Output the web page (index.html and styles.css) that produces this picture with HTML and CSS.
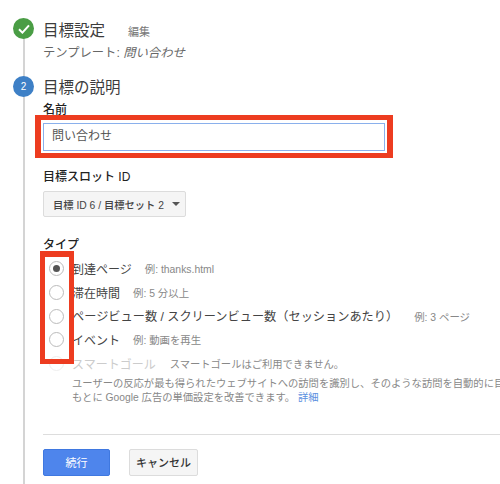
FILE: index.html
```html
<!DOCTYPE html>
<html lang="ja">
<head>
<meta charset="utf-8">
<title>目標の説明</title>
<link rel="stylesheet" href="styles.css">
</head>
<body>
<div class="rail"></div>
<section class="step done">
  <div class="badge green">
    <svg width="12" height="10" viewBox="0 0 12 10"><path d="M1 5.2 4.4 8.6 11 1.4" fill="none" stroke="#fff" stroke-width="2"/></svg>
  </div>
  <div class="step-head">
    <h2 class="title">目標設定</h2><a class="edit">編集</a>
  </div>
  <p class="template">テンプレート: <em>問い合わせ</em></p>
</section>
<section class="step">
  <div class="badge blue">2</div>
  <div class="step-head"><h2 class="title">目標の説明</h2></div>
  <label class="label name-label">名前</label>
  <div class="input">問い合わせ</div>
  <label class="label slot-label">目標スロット ID</label>
  <div class="select">目標 ID 6 / 目標セット 2<span class="caret"></span></div>
  <label class="label type-label">タイプ</label>
  <ul class="radios">
    <li class="radio-row"><span class="radio on"></span><span class="rtext">到達ページ</span><span class="hint">例: thanks.html</span></li>
    <li class="radio-row"><span class="radio"></span><span class="rtext">滞在時間</span><span class="hint">例: 5 分以上</span></li>
    <li class="radio-row"><span class="radio"></span><span class="rtext long">ページビュー数 / スクリーンビュー数（セッションあたり）</span><span class="hint wide">例: 3 ページ</span></li>
    <li class="radio-row"><span class="radio"></span><span class="rtext">イベント</span><span class="hint">例: 動画を再生</span></li>
    <li class="radio-row off"><span class="radio"></span><span class="rtext">スマートゴール</span><span class="hint">スマートゴールはご利用できません。</span></li>
  </ul>
  <p class="desc">ユーザーの反応が最も得られたウェブサイトへの訪問を識別し、そのような訪問を自動的に目<br>もとに Google 広告の単価設定を改善できます。 <a class="more">詳細</a></p>
  <hr class="rule">
  <div class="actions">
    <button class="btn primary">続行</button>
    <button class="btn">キャンセル</button>
  </div>
</section>
<div class="mark mark-input"></div>
<div class="mark mark-radios"></div>
</body>
</html>
```
FILE: styles.css
```css
* { box-sizing: border-box; }
html, body { margin: 0; padding: 0; }
body {
  position: relative;
  width: 500px;
  height: 484px;
  overflow: hidden;
  background: #fff;
  color: #333;
  font-family: "Liberation Sans", "Noto Sans CJK JP", sans-serif;
  font-size: 12px;
  padding: 18px 0 0 43px;
}
.rail { position: absolute; left: 23px; top: 28px; bottom: 0; width: 1.5px; background: #d4d4d4; }
.step { position: relative; }
.step.done { height: 56px; }
.badge {
  position: absolute;
  left: -30px;
  top: 0;
  width: 21px;
  height: 21px;
  border-radius: 50%;
  color: #fff;
  font-size: 10px;
  display: flex;
  align-items: center;
  justify-content: center;
}
.green { background: #4a9d45; }
.blue { background: #3e80c6; top: 2px; }
.step-head { display: flex; align-items: baseline; height: 26px; }
.title { margin: 0; font-size: 15.5px; font-weight: 400; line-height: 26px; color: #3c3c3c; }
.edit { margin-left: 23px; font-size: 11px; color: #777; }
.template { margin: 0; font-size: 12.3px; line-height: 18px; color: #666; white-space: nowrap; }
.template em { font-style: italic; }
.step + .step { padding-top: 1px; }
.label { display: block; font-size: 12px; font-weight: 500; line-height: 16px; color: #222; white-space: nowrap; }
.name-label { margin-top: 1px; }
.input {
  width: 342px;
  height: 28px;
  margin-top: 5px;
  border: 1.5px solid #8ab0ec;
  padding-left: 8px;
  line-height: 25px;
  font-size: 12px;
  color: #555;
}
.slot-label { margin-top: 18px; }
.select {
  display: flex;
  align-items: center;
  width: 143px;
  height: 26px;
  margin-top: 6px;
  padding-left: 9px;
  border: 1px solid #dcdcdc;
  border-radius: 2px;
  background: #f5f5f5;
  font-size: 10.3px;
  font-weight: 500;
  color: #444;
  white-space: nowrap;
}
.caret {
  margin-left: 8px;
  border-left: 4px solid transparent;
  border-right: 4px solid transparent;
  border-top: 4px solid #555;
}
.type-label { margin-top: 20px; }
.radios { list-style: none; margin: 4px 0 0; padding: 0; }
.radio-row { display: flex; align-items: center; height: 23.7px; white-space: nowrap; }
.radio {
  flex: none;
  width: 15px;
  height: 15px;
  margin-left: 6px;
  border: 1px solid #bbb;
  border-radius: 50%;
  display: flex;
  align-items: center;
  justify-content: center;
}
.radio.on::after { content: ""; width: 7px; height: 7px; border-radius: 50%; background: #555; }
.rtext { margin-left: 8px; font-size: 12px; color: #444; }
.rtext.long { font-size: 12.2px; }
.hint { margin-left: 13px; font-size: 10.4px; color: #888; }
.hint.wide { margin-left: 16px; }
.off .radio { border-color: #eee; }
.off .rtext { color: #ccc; }
.off .hint { margin-left: 14px; font-size: 10.3px; color: #888; }
.desc { margin: 0; padding: 1.5px 0 0 29px; font-size: 10.3px; line-height: 14.5px; color: #888; white-space: nowrap; }
.more { color: #5a8fe0; }
.rule { margin: 28px 0 0; border: 0; border-top: 1px solid #ddd; width: 460px; }
.actions { display: flex; gap: 19px; margin-top: 14px; }
.btn {
  height: 27px;
  padding: 0;
  border: 1px solid #dcdcdc;
  border-radius: 2px;
  background: #f5f5f5;
  font-family: inherit;
  font-size: 11px;
  font-weight: 500;
  color: #333;
  width: 69px;
}
.primary { width: 67px; background: #4e85ec; border-color: #3f78e0; color: #fff; font-weight: 400; }
.mark { position: absolute; border-style: solid; border-color: #ed3c20; }
.mark-input { left: 35px; top: 115px; width: 358px; height: 43px; border-width: 5px 6px; }
.mark-radios { left: 40px; top: 251px; width: 34px; height: 113px; border-width: 6px 5px 5px; }
```
